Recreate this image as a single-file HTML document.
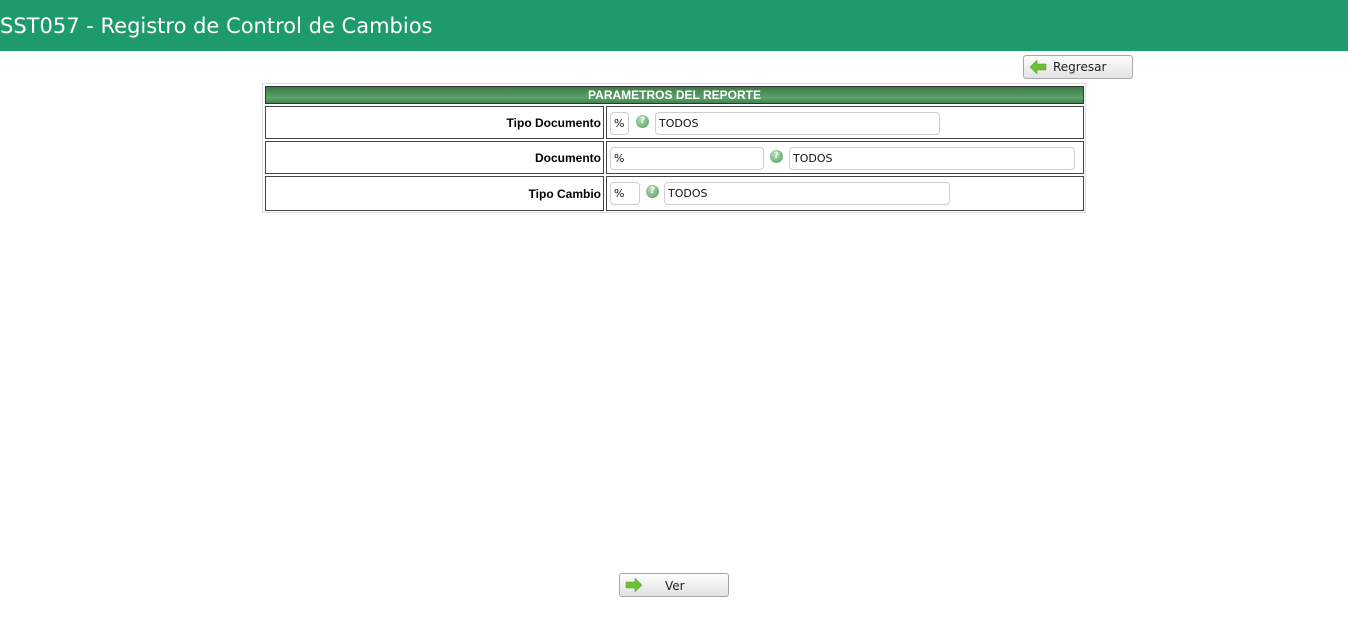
<!DOCTYPE html>
<html><head><meta charset="utf-8"><style>
*{margin:0;padding:0;box-sizing:border-box}
body{width:1348px;height:629px;background:#fff;position:relative;font-family:"DejaVu Sans","Liberation Sans",sans-serif;overflow:hidden}
.hdr{position:absolute;left:0;top:0;width:1348px;height:51px;background:#1e9b6b;color:#fff;font-size:21px;line-height:52px;padding-left:0}
.a{position:absolute}
.btn{position:absolute;height:24px;border:1px solid #a8a8a8;border-radius:3px;background:linear-gradient(#fdfdfd,#e2e2e2);font-size:12px;color:#222}
.cell{position:absolute;border:1px solid #444}
.lbl{font-weight:bold;font-size:12px;text-align:right;padding-right:2px;font-family:"Liberation Sans",sans-serif}
.in{position:absolute;border:1px solid #cfcfcf;border-radius:4px;background:#fff;font-size:11px;padding-left:3px;line-height:22px;color:#111}
.q{position:absolute;width:13px;height:13px;border-radius:50%;background:radial-gradient(circle at 40% 35%,#b9e0b9,#4a9a5a);color:#fff;font-size:9px;font-weight:bold;text-align:center;line-height:13px}
</style></head><body>
<div class="hdr">SST057 - Registro de Control de Cambios</div>
<div class="btn" style="left:1023px;top:55px;width:110px">
<svg class="a" style="left:5px;top:3px" width="18" height="16" viewBox="0 0 18 16"><path d="M1 8 L8 1 V5 H17 V11 H8 V15 Z" fill="#6cc033" stroke="#4a9a1e" stroke-width="0.5"/></svg>
<span class="a" style="left:29px;top:4px">Regresar</span></div>
<div class="a" style="left:262px;top:83px;width:824px;height:130px;border:1px solid #ddd"></div>
<div class="a" style="left:265px;top:86px;width:819px;height:18px;border:1px solid #333;background:linear-gradient(#3f7a4a,#5aa46a 70%,#3f7f4c);color:#fff;font-size:12px;font-weight:bold;text-align:center;line-height:17px;font-family:'Liberation Sans',sans-serif">PARAMETROS DEL REPORTE</div>
<div class="cell lbl" style="left:265px;top:106px;width:339px;height:33px;line-height:33px">Tipo Documento</div>
<div class="cell" style="left:606px;top:106px;width:478px;height:33px"></div>
<div class="cell lbl" style="left:265px;top:141px;width:339px;height:33px;line-height:33px">Documento</div>
<div class="cell" style="left:606px;top:141px;width:478px;height:33px"></div>
<div class="cell lbl" style="left:265px;top:176px;width:339px;height:35px;line-height:35px">Tipo Cambio</div>
<div class="cell" style="left:606px;top:176px;width:478px;height:35px"></div>
<div class="in" style="left:610px;top:112px;width:19px;height:23px">%</div>
<div class="q" style="left:636px;top:115px">?</div>
<div class="in" style="left:655px;top:112px;width:285px;height:23px">TODOS</div>
<div class="in" style="left:610px;top:147px;width:154px;height:23px">%</div>
<div class="q" style="left:770px;top:150px">?</div>
<div class="in" style="left:789px;top:147px;width:286px;height:23px">TODOS</div>
<div class="in" style="left:610px;top:182px;width:30px;height:23px">%</div>
<div class="q" style="left:646px;top:185px">?</div>
<div class="in" style="left:664px;top:182px;width:286px;height:23px">TODOS</div>
<div class="btn" style="left:619px;top:573px;width:110px">
<svg class="a" style="left:5px;top:3px" width="18" height="16" viewBox="0 0 18 16"><path d="M17 8 L10 1 V5 H1 V11 H10 V15 Z" fill="#6cc033" stroke="#4a9a1e" stroke-width="0.5"/></svg>
<span class="a" style="left:45px;top:5px">Ver</span></div>
</body></html>
